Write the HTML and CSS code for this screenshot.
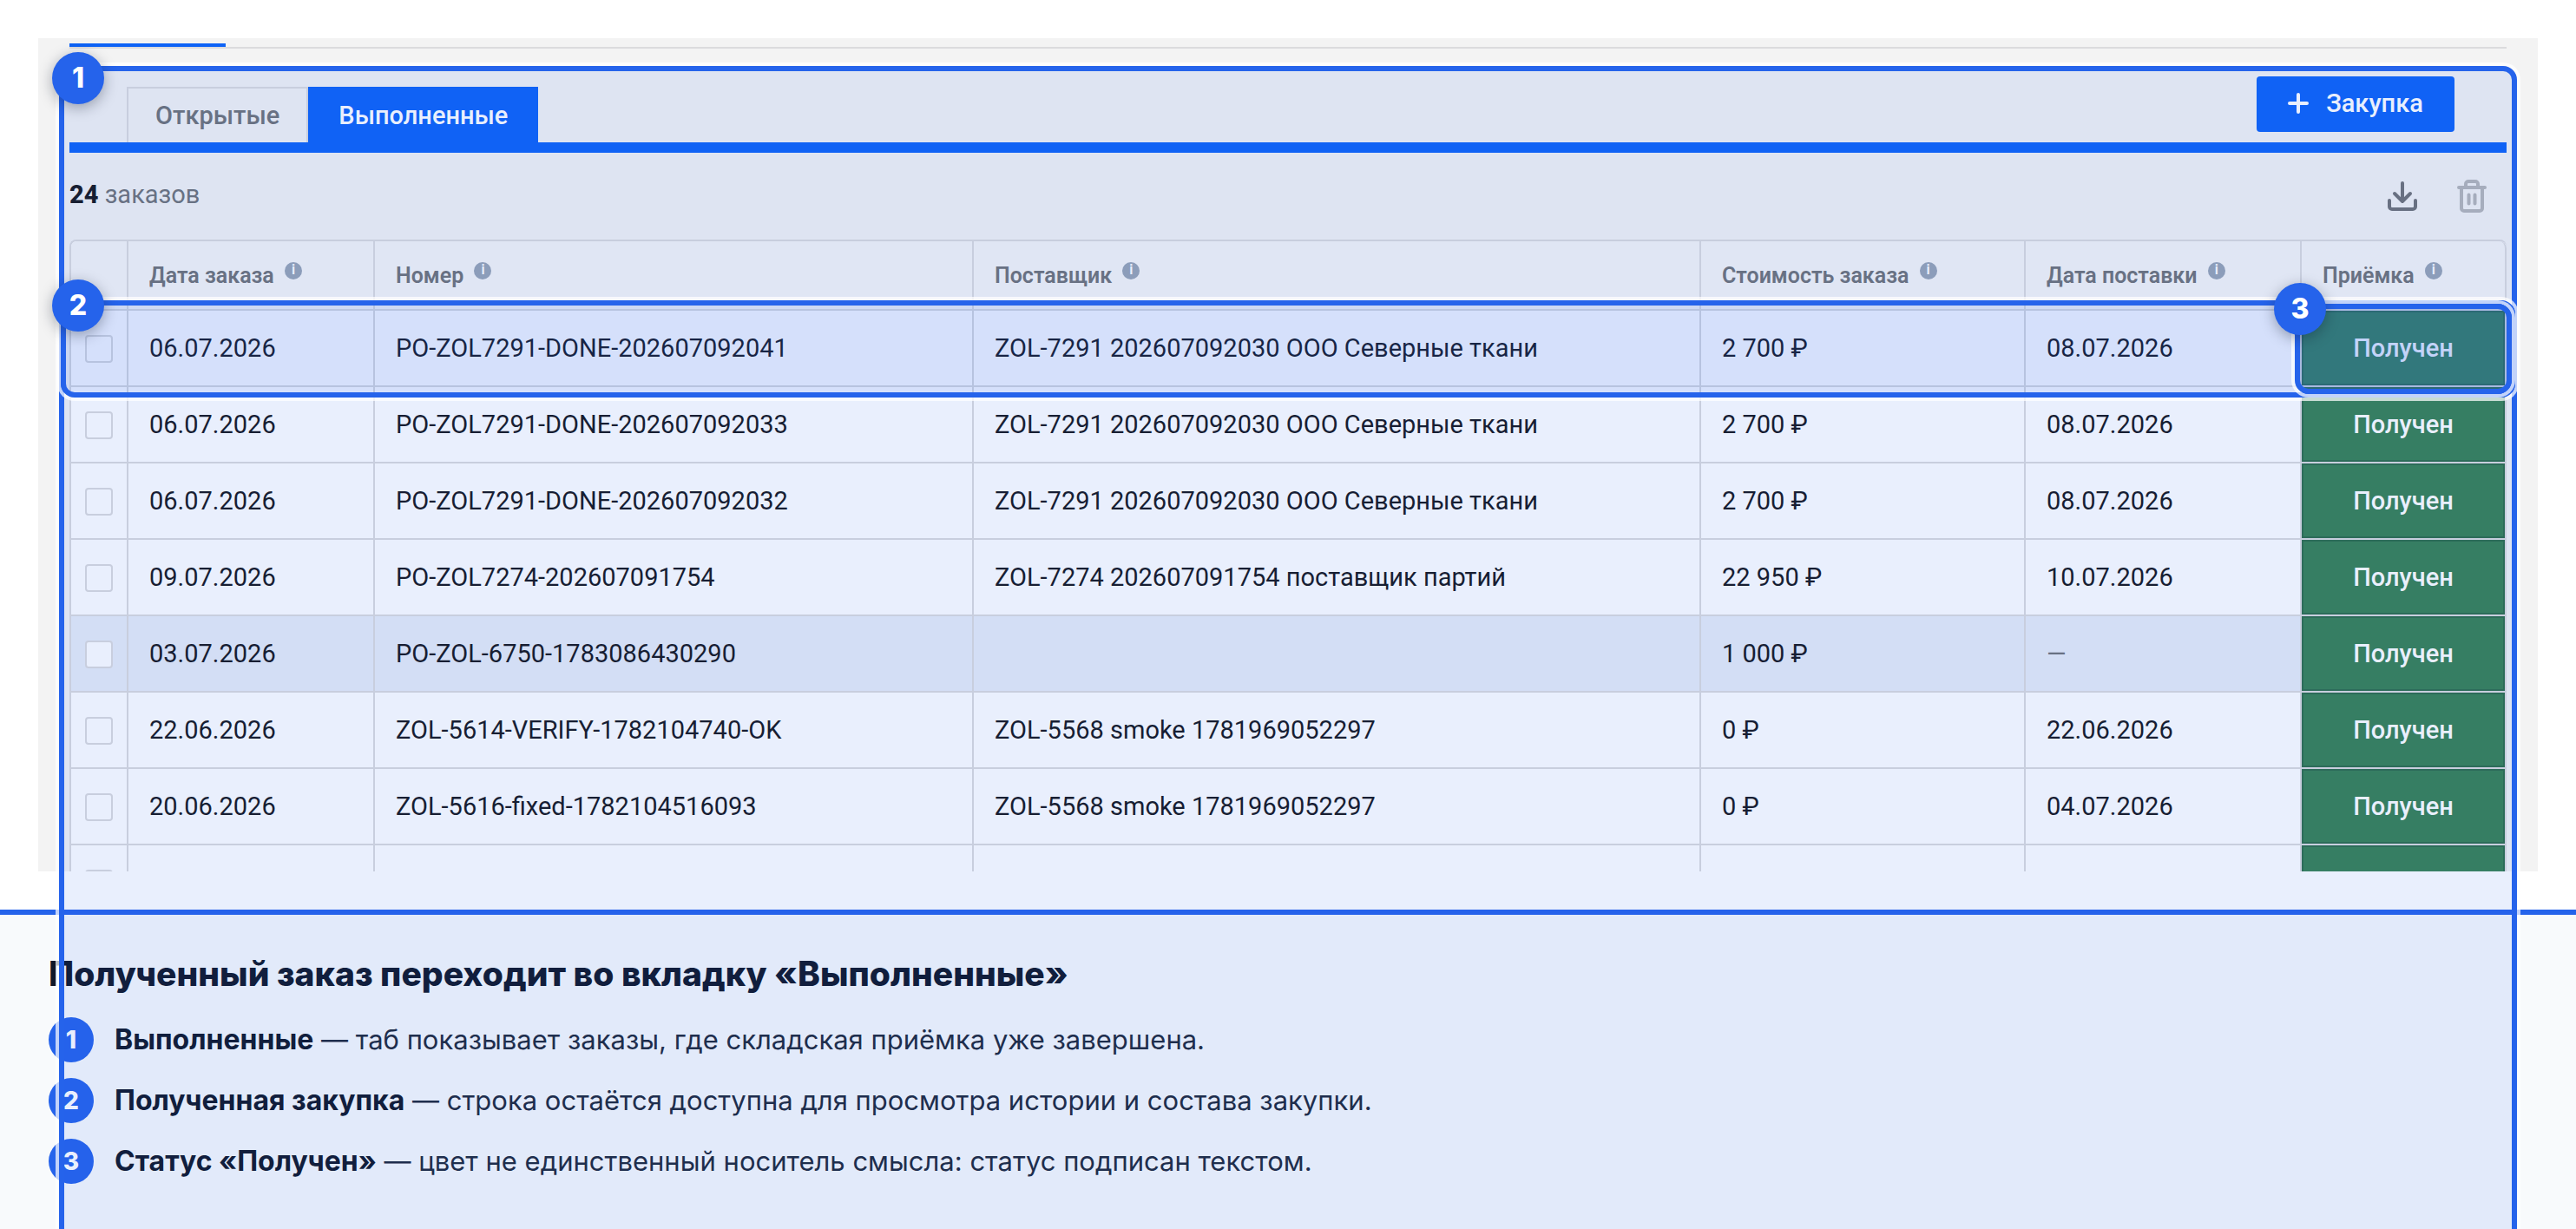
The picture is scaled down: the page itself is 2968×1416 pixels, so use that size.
FILE: index.html
```html
<!DOCTYPE html>
<html lang="ru">
<head>
    <meta charset="UTF-8">
    <meta name="viewport" content="width=device-width, initial-scale=1.0">
    <title>Полученный заказ переходит во вкладку «Выполненные»</title>
    <link rel="stylesheet" href="styles.css">
</head>
<body>

<main class="guide">
    <!-- App window -->
    <div class="screen">
        <div class="top-line"></div>

        <nav class="tabs">
            <button class="tab" type="button">Открытые</button>
            <button class="tab active" type="button">Выполненные</button>
            <button class="add-button" type="button">
                <svg width="24" height="24" viewBox="0 0 24 24" aria-hidden="true">
                    <path d="M12 2v20M2 12h20" fill="none" stroke="currentColor" stroke-width="4" stroke-linecap="round"/>
                </svg>
                Закупка
            </button>
        </nav>

        <div class="toolbar">
            <p class="count"><b>24</b> заказов</p>
            <button class="icon-button" type="button" aria-label="Скачать">
                <svg width="40" height="40" viewBox="0 0 40 40">
                    <path d="M20 5v20M11 17l9 9 9-9M5 25v7a3 3 0 0 0 3 3h24a3 3 0 0 0 3-3v-7" fill="none" stroke="currentColor" stroke-width="4" stroke-linecap="round" stroke-linejoin="round"/>
                </svg>
            </button>
            <button class="icon-button" type="button" aria-label="Удалить" disabled>
                <svg width="40" height="40" viewBox="0 0 40 40">
                    <path d="M5 10h30M8 10v24a3 3 0 0 0 3 3h18a3 3 0 0 0 3-3V10M13 10V6a3 3 0 0 1 3-3h8a3 3 0 0 1 3 3v4M16.5 18.500v10M23.500 18.500v10" fill="none" stroke="currentColor" stroke-width="4" stroke-linecap="round" stroke-linejoin="round"/>
                </svg>
            </button>
        </div>

        <table class="orders">
            <colgroup>
                <col class="col-check">
                <col class="col-date">
                <col class="col-number">
                <col class="col-supplier">
                <col class="col-cost">
                <col class="col-delivery">
                <col class="col-status">
            </colgroup>
            <thead>
                <tr>
                    <th></th>
                    <th>Дата заказа <span class="info">i</span></th>
                    <th>Номер <span class="info">i</span></th>
                    <th>Поставщик <span class="info">i</span></th>
                    <th>Стоимость заказа <span class="info">i</span></th>
                    <th>Дата поставки <span class="info">i</span></th>
                    <th>Приёмка <span class="info">i</span></th>
                </tr>
            </thead>
            <tbody>
                <tr>
                    <td class="check"><input type="checkbox" aria-label="Выбрать заказ"></td>
                    <td>06.07.2026</td>
                    <td>PO-ZOL7291-DONE-202607092041</td>
                    <td>ZOL-7291 202607092030 ООО Северные ткани</td>
                    <td>2 700 ₽</td>
                    <td>08.07.2026</td>
                    <td class="status">Получен</td>
                </tr>
                <tr>
                    <td class="check"><input type="checkbox" aria-label="Выбрать заказ"></td>
                    <td>06.07.2026</td>
                    <td>PO-ZOL7291-DONE-202607092033</td>
                    <td>ZOL-7291 202607092030 ООО Северные ткани</td>
                    <td>2 700 ₽</td>
                    <td>08.07.2026</td>
                    <td class="status">Получен</td>
                </tr>
                <tr>
                    <td class="check"><input type="checkbox" aria-label="Выбрать заказ"></td>
                    <td>06.07.2026</td>
                    <td>PO-ZOL7291-DONE-202607092032</td>
                    <td>ZOL-7291 202607092030 ООО Северные ткани</td>
                    <td>2 700 ₽</td>
                    <td>08.07.2026</td>
                    <td class="status">Получен</td>
                </tr>
                <tr>
                    <td class="check"><input type="checkbox" aria-label="Выбрать заказ"></td>
                    <td>09.07.2026</td>
                    <td>PO-ZOL7274-202607091754</td>
                    <td>ZOL-7274 202607091754 поставщик партий</td>
                    <td>22 950 ₽</td>
                    <td>10.07.2026</td>
                    <td class="status">Получен</td>
                </tr>
                <tr class="hovered">
                    <td class="check"><input type="checkbox" aria-label="Выбрать заказ"></td>
                    <td>03.07.2026</td>
                    <td>PO-ZOL-6750-1783086430290</td>
                    <td></td>
                    <td>1 000 ₽</td>
                    <td class="empty">—</td>
                    <td class="status">Получен</td>
                </tr>
                <tr>
                    <td class="check"><input type="checkbox" aria-label="Выбрать заказ"></td>
                    <td>22.06.2026</td>
                    <td>ZOL-5614-VERIFY-1782104740-OK</td>
                    <td>ZOL-5568 smoke 1781969052297</td>
                    <td>0 ₽</td>
                    <td>22.06.2026</td>
                    <td class="status">Получен</td>
                </tr>
                <tr>
                    <td class="check"><input type="checkbox" aria-label="Выбрать заказ"></td>
                    <td>20.06.2026</td>
                    <td>ZOL-5616-fixed-1782104516093</td>
                    <td>ZOL-5568 smoke 1781969052297</td>
                    <td>0 ₽</td>
                    <td>04.07.2026</td>
                    <td class="status">Получен</td>
                </tr>
                <tr>
                    <td class="check"><input type="checkbox" aria-label="Выбрать заказ"></td>
                    <td></td>
                    <td></td>
                    <td></td>
                    <td></td>
                    <td></td>
                    <td class="status"></td>
                </tr>
            </tbody>
        </table>
    </div>

    <!-- Caption -->
    <section class="caption">
        <h1>Полученный заказ переходит во вкладку «Выполненные»</h1>
        <ol class="legend">
            <li><span class="num">1</span><p><b>Выполненные</b> — таб показывает заказы, где складская приёмка уже завершена.</p></li>
            <li><span class="num">2</span><p><b>Полученная закупка</b> — строка остаётся доступна для просмотра истории и состава закупки.</p></li>
            <li><span class="num">3</span><p><b>Статус «Получен»</b> — цвет не единственный носитель смысла: статус подписан текстом.</p></li>
        </ol>
    </section>

    <!-- Callouts over the screen -->
    <div class="mark mark-tab"></div>
    <div class="mark mark-row"></div>
    <div class="mark mark-status"></div>
    <span class="badge badge-tab">1</span>
    <span class="badge badge-row">2</span>
    <span class="badge badge-status">3</span>
</main>

</body>
</html>
```

FILE: styles.css
```css
* {
    box-sizing: border-box;
}

body {
    margin: 0;
    background-color: #fff;
    font-family: Inter, "Noto Sans", sans-serif;
}

.guide {
    position: relative;
    min-height: 100vh;
    padding-top: 44px;
    display: flex;
    flex-direction: column;
    overflow: hidden;
}

/* App window */
.screen {
    height: 960px;
    margin: 0 44px 44px;
    padding: 6px 36px 0;
    background-color: #f3f3f3;
    font-family: Roboto, "Noto Sans", sans-serif;
    font-size: 29px;
    color: #16171d;
    overflow: hidden;
}

.top-line {
    height: 6px;
    border-bottom: 2px solid #dbdbdd;
}

.top-line::before {
    content: "";
    display: block;
    width: 180px;
    height: 4px;
    background-color: #0e63f6;
}

.tabs {
    display: flex;
    align-items: flex-end;
    height: 120px;
    padding: 0 60px 0 66px;
    border-bottom: 12px solid #0e63f6;
}

.tab {
    height: 64px;
    padding: 0 31px;
    border: 2px solid #dbdbdd;
    border-bottom: none;
    background: none;
    font: 500 29px Roboto, "Noto Sans", sans-serif;
    color: #707378;
}

.tab.active {
    padding: 0 33px;
    border-color: #0e63f6;
    background-color: #0e63f6;
    color: #fff;
}

.add-button {
    display: flex;
    align-items: center;
    justify-content: center;
    gap: 20px;
    width: 228px;
    height: 64px;
    margin: 0 0 12px auto;
    padding: 0 0 2px;
    border: none;
    border-radius: 4px;
    background-color: #0e63f6;
    font: 500 29px Roboto, "Noto Sans", sans-serif;
    color: #fff;
}

.toolbar {
    display: flex;
    align-items: center;
    gap: 40px;
    height: 100px;
    padding: 0 20px 0 0;
}

.count {
    margin: 0 auto 0 0;
    padding-bottom: 4px;
    color: #707378;
}

.count b {
    font-weight: 800;
    color: #16171d;
}

.icon-button {
    display: flex;
    padding: 0;
    border: none;
    background: none;
    color: #707276;
}

.icon-button:disabled {
    color: #b5b6b8;
}

.orders {
    width: 100%;
    table-layout: fixed;
    border-collapse: separate;
    border-spacing: 0;
    border-top: 2px solid #dbdbdd;
    border-left: 2px solid #dbdbdd;
    border-radius: 8px 8px 0 0;
    background-color: #fff;
}

.col-check { width: 66px; }
.col-date { width: 284px; }
.col-number { width: 690px; }
.col-cost { width: 374px; }
.col-delivery { width: 318px; }
.col-status { width: 236px; }

.orders th {
    height: 80px;
    padding: 0 0 0 24px;
    border-right: 2px solid #dbdbdd;
    border-bottom: 2px solid #dbdbdd;
    background-color: #f5f5f5;
    font-size: 25px;
    font-weight: 600;
    color: #707378;
    text-align: left;
    white-space: nowrap;
}

.orders th:first-child {
    border-top-left-radius: 6px;
}

.orders th:last-child {
    border-top-right-radius: 8px;
}

.orders td {
    height: 88px;
    padding: 0 0 0 24px;
    border-right: 2px solid #dbdbdd;
    border-bottom: 2px solid #dbdbdd;
    white-space: nowrap;
}

.orders .hovered td {
    background-color: #e7ecf6;
}

.orders .check {
    padding: 2px 0 0;
    text-align: center;
}

.check input {
    appearance: none;
    display: block;
    width: 32px;
    height: 32px;
    margin: 0 auto;
    border: 2px solid #dbdbdd;
    border-radius: 4px;
    background-color: #fff;
}

.orders .empty {
    color: #707378;
}

.orders .status,
.orders .hovered .status {
    padding: 0;
    background-color: #388254;
    box-shadow: inset 0 0 0 2px #2e6e4a;
    font-weight: 500;
    color: #fff;
    text-align: center;
}

.info {
    display: inline-block;
    width: 20px;
    height: 20px;
    margin-left: 6px;
    border-radius: 50%;
    background-color: #98a4b5;
    font-size: 16px;
    line-height: 18px;
    color: #fff;
    text-align: center;
    vertical-align: 10px;
}

/* Caption */
.caption {
    flex: 1;
    padding: 44px 56px 52px;
    border-top: 6px solid #2563eb;
    background-color: #f8fafc;
}

.caption h1 {
    margin: 0 0 26px;
    font-size: 39px;
    line-height: 48px;
    font-weight: 800;
    color: #0f172a;
}

.legend {
    display: flex;
    flex-direction: column;
    gap: 18px;
    margin: 0;
    padding: 0;
    list-style: none;
}

.legend li {
    display: flex;
    align-items: center;
    gap: 24px;
    font-size: 31px;
    line-height: 52px;
    color: #1e293b;
}

.legend p {
    margin: 0;
}

.legend b {
    font-size: 32px;
    color: #0f172a;
}

.num {
    width: 52px;
    height: 52px;
    border-radius: 50%;
    background-color: #2563eb;
    font-size: 28px;
    font-weight: 800;
    color: #fff;
    text-align: center;
}

/* Callouts */
.mark {
    position: absolute;
    border: 6px solid #2563eb;
    border-radius: 16px;
    background-color: rgba(37, 99, 235, 0.1);
    background-clip: padding-box;
    box-shadow: 0 0 0 4px rgba(255, 255, 255, 0.72);
}

.mark-tab {
    top: 76px;
    right: 68px;
    bottom: -40px;
    left: 68px;
}

.mark-row {
    top: 346px;
    right: 70px;
    left: 70px;
    height: 112px;
}

.mark-status {
    top: 350px;
    right: 74px;
    width: 250px;
    height: 104px;
}

.badge {
    position: absolute;
    width: 60px;
    height: 60px;
    border-radius: 50%;
    background-color: #2563eb;
    box-shadow: 0 4px 16px rgba(15, 23, 42, 0.35);
    font-size: 32px;
    line-height: 60px;
    font-weight: 800;
    color: #fff;
    text-align: center;
}

.badge-tab {
    top: 60px;
    left: 60px;
}

.badge-row {
    top: 322px;
    left: 60px;
}

.badge-status {
    top: 326px;
    right: 288px;
}
```
